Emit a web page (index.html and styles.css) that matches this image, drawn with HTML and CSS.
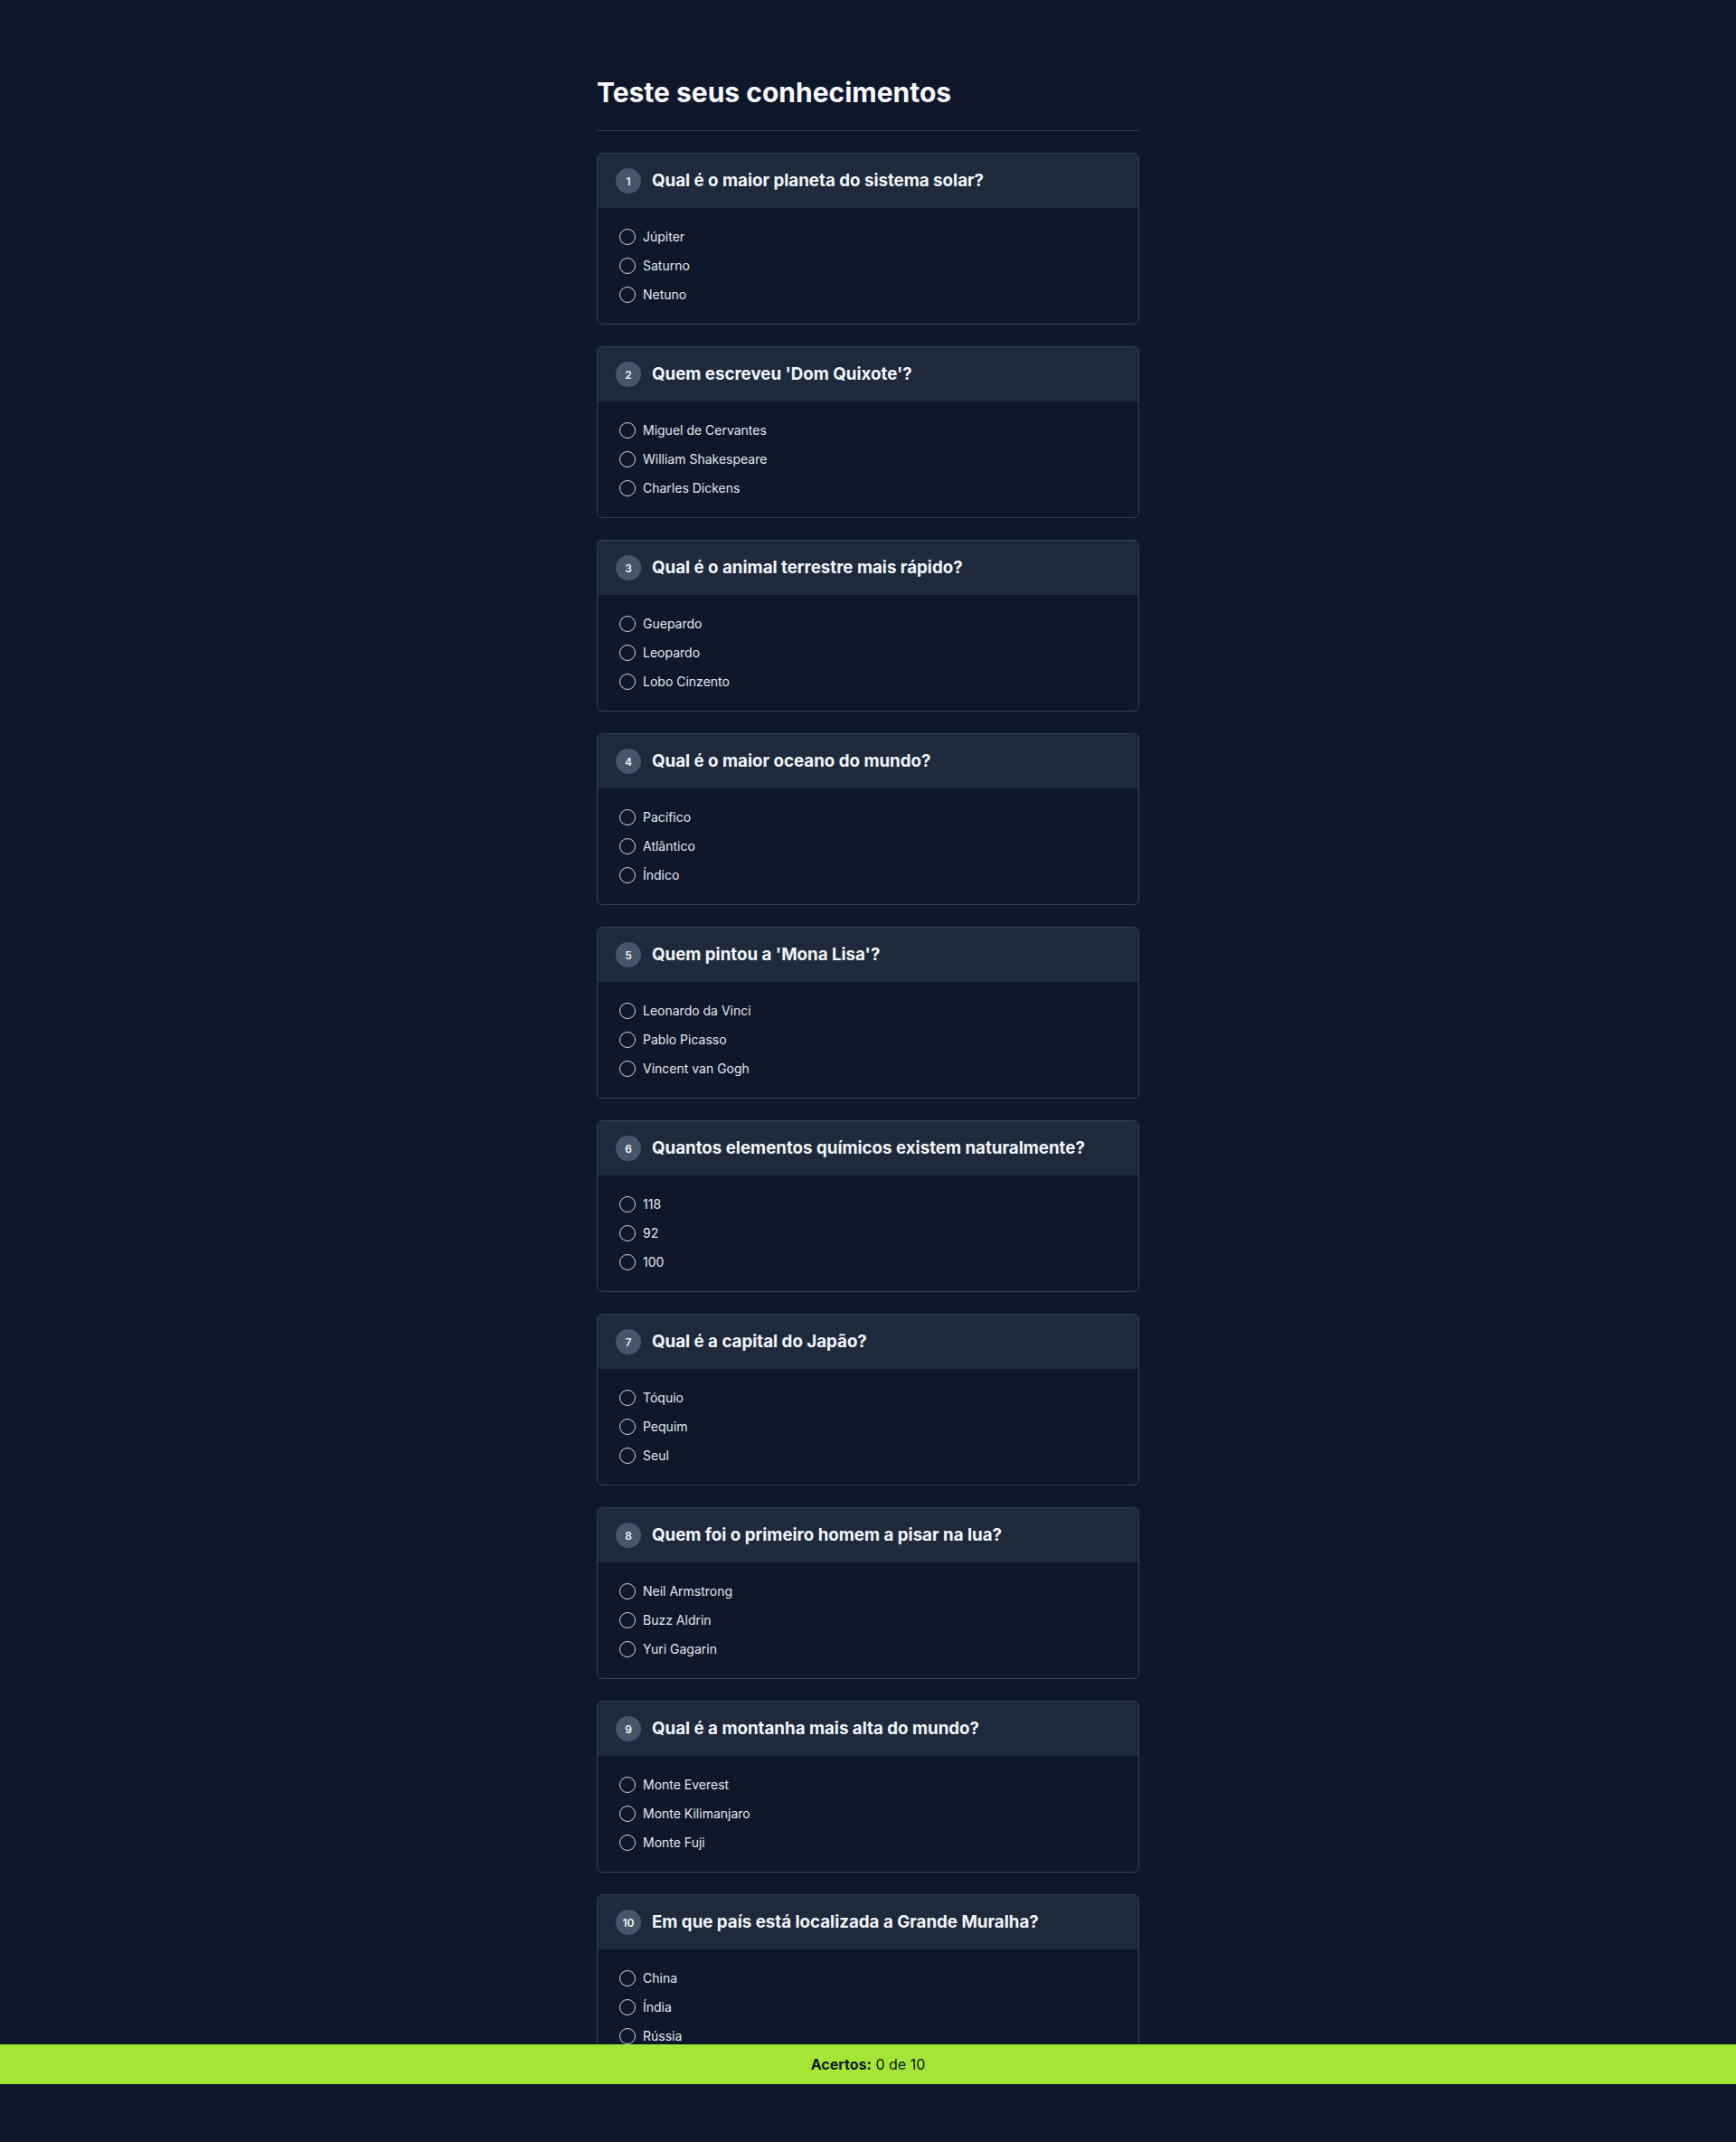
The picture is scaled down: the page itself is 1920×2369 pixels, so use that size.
FILE: index.html
```html
<!DOCTYPE html>
<html lang="pt-BR">
<head>
<meta charset="utf-8">
<title>Teste seus conhecimentos</title>
<link rel="stylesheet" href="styles.css">
</head>
<body>
<main class="quiz">
  <h1 class="title">Teste seus conhecimentos</h1>
  <div class="questions">
    <section class="card">
      <header class="card-head"><span class="badge">1</span><h3 class="question">Qual é o maior planeta do sistema solar?</h3></header>
      <div class="options">
        <label class="option"><span class="radio"></span>Júpiter</label>
        <label class="option"><span class="radio"></span>Saturno</label>
        <label class="option"><span class="radio"></span>Netuno</label>
      </div>
    </section>
    <section class="card">
      <header class="card-head"><span class="badge">2</span><h3 class="question">Quem escreveu 'Dom Quixote'?</h3></header>
      <div class="options">
        <label class="option"><span class="radio"></span>Miguel de Cervantes</label>
        <label class="option"><span class="radio"></span>William Shakespeare</label>
        <label class="option"><span class="radio"></span>Charles Dickens</label>
      </div>
    </section>
    <section class="card">
      <header class="card-head"><span class="badge">3</span><h3 class="question">Qual é o animal terrestre mais rápido?</h3></header>
      <div class="options">
        <label class="option"><span class="radio"></span>Guepardo</label>
        <label class="option"><span class="radio"></span>Leopardo</label>
        <label class="option"><span class="radio"></span>Lobo Cinzento</label>
      </div>
    </section>
    <section class="card">
      <header class="card-head"><span class="badge">4</span><h3 class="question">Qual é o maior oceano do mundo?</h3></header>
      <div class="options">
        <label class="option"><span class="radio"></span>Pacífico</label>
        <label class="option"><span class="radio"></span>Atlântico</label>
        <label class="option"><span class="radio"></span>Índico</label>
      </div>
    </section>
    <section class="card">
      <header class="card-head"><span class="badge">5</span><h3 class="question">Quem pintou a 'Mona Lisa'?</h3></header>
      <div class="options">
        <label class="option"><span class="radio"></span>Leonardo da Vinci</label>
        <label class="option"><span class="radio"></span>Pablo Picasso</label>
        <label class="option"><span class="radio"></span>Vincent van Gogh</label>
      </div>
    </section>
    <section class="card">
      <header class="card-head"><span class="badge">6</span><h3 class="question">Quantos elementos químicos existem naturalmente?</h3></header>
      <div class="options">
        <label class="option"><span class="radio"></span>118</label>
        <label class="option"><span class="radio"></span>92</label>
        <label class="option"><span class="radio"></span>100</label>
      </div>
    </section>
    <section class="card">
      <header class="card-head"><span class="badge">7</span><h3 class="question">Qual é a capital do Japão?</h3></header>
      <div class="options">
        <label class="option"><span class="radio"></span>Tóquio</label>
        <label class="option"><span class="radio"></span>Pequim</label>
        <label class="option"><span class="radio"></span>Seul</label>
      </div>
    </section>
    <section class="card">
      <header class="card-head"><span class="badge">8</span><h3 class="question">Quem foi o primeiro homem a pisar na lua?</h3></header>
      <div class="options">
        <label class="option"><span class="radio"></span>Neil Armstrong</label>
        <label class="option"><span class="radio"></span>Buzz Aldrin</label>
        <label class="option"><span class="radio"></span>Yuri Gagarin</label>
      </div>
    </section>
    <section class="card">
      <header class="card-head"><span class="badge">9</span><h3 class="question">Qual é a montanha mais alta do mundo?</h3></header>
      <div class="options">
        <label class="option"><span class="radio"></span>Monte Everest</label>
        <label class="option"><span class="radio"></span>Monte Kilimanjaro</label>
        <label class="option"><span class="radio"></span>Monte Fuji</label>
      </div>
    </section>
    <section class="card">
      <header class="card-head"><span class="badge">10</span><h3 class="question">Em que país está localizada a Grande Muralha?</h3></header>
      <div class="options">
        <label class="option"><span class="radio"></span>China</label>
        <label class="option"><span class="radio"></span>Índia</label>
        <label class="option"><span class="radio"></span>Rússia</label>
      </div>
    </section>
  </div>
</main>
<footer class="score"><strong>Acertos:</strong>&nbsp;0 de 10</footer>
</body>
</html>
```
FILE: styles.css
```css
* { box-sizing: border-box; }
html, body { margin: 0; padding: 0; }
body {
  background: #0f172a;
  color: #e2e8f0;
  font-family: Inter, "Noto Sans", sans-serif;
}
.quiz {
  width: 600px;
  margin: 0 auto;
  padding: 84px 0 60px;
}
.title {
  margin: 0;
  padding-bottom: 24px;
  border-bottom: 1px solid #334155;
  font-size: 30px;
  line-height: 36px;
  font-weight: 700;
  color: #f8fafc;
}
.questions {
  margin-top: 24px;
  display: flex;
  flex-direction: column;
  gap: 24px;
}
.card {
  border: 1px solid #334155;
  border-radius: 6px;
  overflow: hidden;
}
.card-head {
  display: flex;
  align-items: center;
  gap: 12px;
  padding: 16px 20px;
  background: #1e293b;
}
.badge {
  width: 28px;
  height: 28px;
  border-radius: 50%;
  background: #475569;
  color: #f1f5f9;
  font-size: 12px;
  font-weight: 600;
  display: flex;
  align-items: center;
  justify-content: center;
  flex-shrink: 0;
}
.question {
  margin: 0;
  font-size: 18.72px;
  line-height: 28px;
  font-weight: 700;
  color: #f1f5f9;
}
.options {
  padding: 20px 24px;
  display: flex;
  flex-direction: column;
  gap: 8px;
}
.option {
  display: flex;
  align-items: center;
  gap: 8px;
  height: 24px;
  font-size: 14px;
  line-height: 20px;
  color: #e2e8f0;
}
.radio {
  width: 18px;
  height: 18px;
  border-radius: 50%;
  border: 1px solid #cbd5e1;
  flex-shrink: 0;
}
.score {
  position: fixed;
  left: 0;
  right: 0;
  bottom: 64px;
  height: 44px;
  background: #a3e635;
  color: #111827;
  font-size: 16px;
  display: flex;
  align-items: center;
  justify-content: center;
}
.score strong { font-weight: 700; }
```
